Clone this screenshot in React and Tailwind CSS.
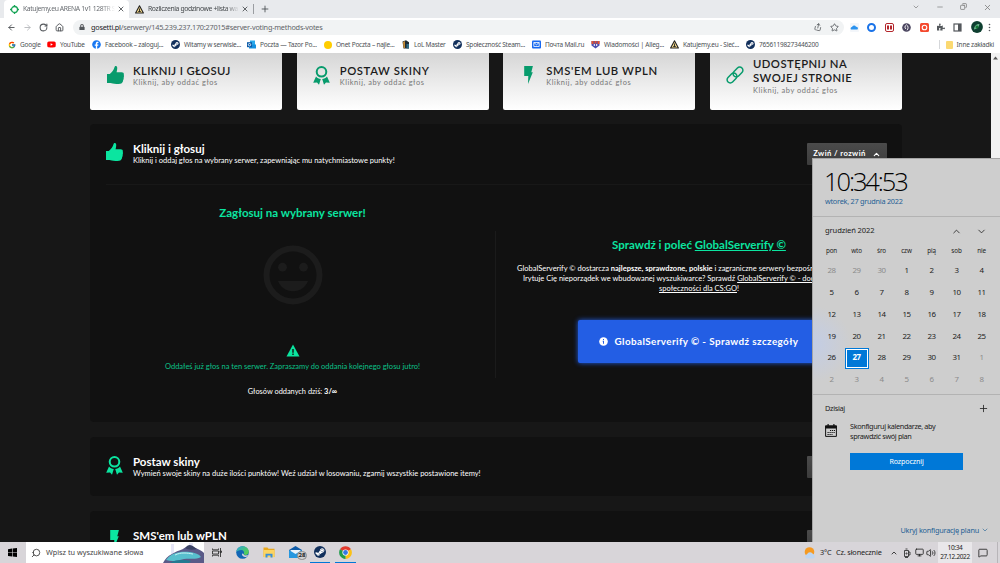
import clsx from "clsx";
import { FaFacebook, FaSteamSymbol, FaLock, FaPuzzlePiece, FaYoutube } from "react-icons/fa";
import { FcGoogle } from "react-icons/fc";
import {
  ArrowLeft, ArrowRight, ChevronDown, ChevronUp, Copy, House, MessageSquare, Minus,
  Monitor, Plus, RotateCw, Search, Share, Star, Volume2, X,
} from "lucide-react";

/* ---------- small drawings ---------- */

function ThumbIcon() {
  return (
    <svg viewBox="0 0 17 18" className="h-[18px] w-[17px]" fill="currentColor">
      <path d="M8.8 0C10.2 0 10.4 1.6 10.1 3.4L9.6 6.2h5c2 0 2.5 1.2 2.2 2.6.3 1 .2 2-.1 2.8.1 1-.1 1.9-.6 2.7 0 1-.5 1.9-1 2.4-.8 1-2.6 1.3-5.6 1.3-3.4 0-4.5-.8-6-1H0V8h2.8C5 6.4 6.8 4 7.4 1.6 7.6.6 7.9 0 8.8 0z" />
    </svg>
  );
}

function RibbonIcon() {
  return (
    <svg viewBox="0 0 17 19" className="h-[19px] w-[17px]" fill="currentColor">
      <circle cx="8.5" cy="5.8" r="4.8" fill="none" stroke="currentColor" strokeWidth="2" />
      <path d="M3 10.5c1.2 1.5 2.8 2.3 4.8 2.4L6 18.8l-2-2.4-3.8.4z" />
      <path d="M14 10.5c-1.2 1.5-2.8 2.3-4.8 2.4l1.8 5.9 2-2.4 3.8.4z" />
    </svg>
  );
}

function FlashIcon() {
  return (
    <svg viewBox="0 0 17 18" className="h-[18px] w-[17px]" fill="currentColor">
      <path d="M4.2 0h8.7l-1.6 6.200h1.500L8 18l.3-8H4.200z" />
    </svg>
  );
}

function LinkIcon() {
  return (
    <svg viewBox="0 0 18 18" className="h-[18px] w-[18px]" fill="none" stroke="currentColor" strokeWidth="1.5">
      <rect x="-5.6" y="-3.2" width="11.2" height="6.4" rx="3.2" transform="translate(6 12) rotate(-45)" />
      <rect x="-5.6" y="-3.2" width="11.2" height="6.4" rx="3.2" transform="translate(12 6) rotate(-45)" />
    </svg>
  );
}

function SmileIcon() {
  return (
    <svg viewBox="0 0 60 60" className="h-[60px] w-[60px] text-[#1c1c1c]" fill="currentColor">
      <circle cx="30" cy="30" r="26.5" fill="none" stroke="currentColor" strokeWidth="6" />
      <circle cx="19.5" cy="22.2" r="4.4" />
      <circle cx="40.5" cy="22.2" r="4.4" />
      <path d="M15 36h30c-2.5 6.5-8 10.3-15 10.3S17.5 42.5 15 36z" />
    </svg>
  );
}

function WarningIcon() {
  return (
    <svg viewBox="0 0 14 13" className="h-[13px] w-[14px]">
      <path d="M7 .5l6.5 12H.5z" fill="#0be5a0" />
      <path d="M6.3 5h1.4v3.7H6.3zM6.3 9.6h1.4V11H6.3z" fill="#111" />
    </svg>
  );
}

function SteamIcon({ className = "size-[9px]" }) {
  return (
    <span className={clsx("flex items-center justify-center rounded-full bg-[#12305c] text-white", className)}>
      <FaSteamSymbol className="size-full p-px" />
    </span>
  );
}

function TriangleLogo() {
  return (
    <svg viewBox="0 0 9 9" className="size-[9px] shrink-0">
      <path d="M4.5.8L8.4 8H.6z" fill="#f4d98a" stroke="#222" strokeWidth="1.1" strokeLinejoin="round" />
      <path d="M4.5 3.5v3M3.2 6.5h2.6" stroke="#222" strokeWidth=".9" />
    </svg>
  );
}

function TargetLogo() {
  return (
    <svg viewBox="0 0 9 9" className="size-[9px] shrink-0" fill="none" stroke="#18a558" strokeWidth="1.3">
      <circle cx="4.5" cy="4.5" r="3" />
      <path d="M4.5 0v2M4.5 7v2M0 4.5h2M7 4.5h2" />
    </svg>
  );
}

function OutlookLogo() {
  return (
    <svg viewBox="0 0 9 9" className="size-[9px]">
      <path d="M3 .5h5V6H3z" fill="#28a8ea" />
      <path d="M2 4.5h7v4H2z" fill="#1490df" />
      <path d="M0 2.2h5v5H0z" fill="#0a5aa8" />
      <circle cx="2.5" cy="4.7" r="1.2" fill="none" stroke="#fff" strokeWidth=".8" />
    </svg>
  );
}

function LolLogo() {
  return (
    <svg viewBox="0 0 8 9" className="h-[9px] w-[8px]">
      <path d="M.5 1.5L4 .3l3 2v6.200H1.500z" fill="#1c2a33" />
      <path d="M1 2l2-1v7H1.500z" fill="#c58b36" />
      <path d="M4.500 4H7v4.500H4.500z" fill="#2c6a85" />
    </svg>
  );
}

function MailLogo() {
  return (
    <svg viewBox="0 0 9 9" className="size-[9px]">
      <rect y=".5" width="9" height="8" rx="1" fill="#1668f0" />
      <path d="M1.8 2.5h5.4v4H1.8zM1.8 2.5l2.7 2.3 2.7-2.3" fill="none" stroke="#fff" strokeWidth=".8" />
    </svg>
  );
}

function AllegLogo() {
  return (
    <svg viewBox="0 0 9 9" className="size-[9px]">
      <path d="M.5 1h8v4.500l-4 3-4-3z" fill="#4a4fb0" />
      <path d="M.5 1h2v3h-2zM6.500 1h2v3h-2zM3.500 1h2v2.500h-2z" fill="#e8542f" />
      <path d="M2.800 4h1v2h-1zM5.200 4h1v2h-1z" fill="#fff" />
    </svg>
  );
}

function EdgeLogo() {
  return (
    <svg viewBox="0 0 13 13" className="size-[13px]">
      <defs>
        <linearGradient id="edge" x1="0" y1="0" x2="1" y2=".6">
          <stop offset="0" stopColor="#2ba5dd" />
          <stop offset="1" stopColor="#55cf52" />
        </linearGradient>
      </defs>
      <circle cx="6.5" cy="6.5" r="6.3" fill="#1266b5" />
      <path d="M.3 6C.8 2.3 3.3.2 6.6.2c3.7 0 6.2 2.6 6.2 5.500 0 2-1.500 3.200-3.300 3.200-1.200 0-1.900-.6-1.700-1.200.8-1.700-.3-3.700-2.600-3.700C2.900 4 1 5 .3 6z" fill="url(#edge)" />
      <path d="M7.700 8c-.3.700.4 1.500 1.900 1.500 1.100 0 2-.3 2.700-.8-.5 1-1.200 1.800-2 2.300C8 11.500 5.600 10 6 7.500z" fill="#d8d5d9" />
    </svg>
  );
}

function FolderLogo() {
  return (
    <svg viewBox="0 0 12 11" className="h-[11px] w-[12px]">
      <path d="M.5.5h4l1 1.300h6V10H.5z" fill="#e8a81d" />
      <path d="M.5 3h11v7.200H.5z" fill="#fcd462" />
      <path d="M2.500 10.500V6.800h7v3.700h-2V8.600h-3v1.900z" fill="#3a8fd9" />
    </svg>
  );
}

function MailApp() {
  return (
    <div className="relative h-[13px] w-[18px]">
      <svg viewBox="0 0 13 12" className="h-[12px] w-[13px]">
        <path d="M0 4l6.500-4L13 4v8H0z" fill="#0f5ca8" />
        <path d="M1.500 4h10v4h-10z" fill="#e9f3fb" />
        <path d="M0 4l6.500 4L13 4v8H0z" fill="#2697df" />
      </svg>
      <span className="absolute top-[5px] left-[8px] flex h-[9px] w-[10px] items-center justify-center rounded-full border border-[#8b8b8b] bg-[#cfcfcf] text-[6px] font-bold text-[#222]">
        28
      </span>
    </div>
  );
}

function ChromeLogo() {
  return (
    <svg viewBox="0 0 13 13" className="size-[13px]">
      <path d="M6.500 6.500L.98 3.300A6.400 6.400 0 0 1 12.020 3.300z" fill="#e33b2e" />
      <path d="M6.500 6.500L12.020 3.300A6.400 6.400 0 0 1 6.500 12.900z" fill="#fbc116" />
      <path d="M6.500 6.500V12.900A6.400 6.400 0 0 1 .98 3.300z" fill="#229c4c" />
      <circle cx="6.5" cy="6.5" r="3.1" fill="#fff" />
      <circle cx="6.5" cy="6.5" r="2.4" fill="#3578e5" />
    </svg>
  );
}

/* ---------- browser ---------- */

const bookmarks = [
  { label: "Google", width: "w-[40px]", icon: <FcGoogle className="size-[8px]" /> },
  { label: "YouTube", width: "w-[45px]", icon: <FaYoutube className="size-[9px] text-[#f00]" /> },
  { label: "Facebook – zaloguj...", width: "w-[79px]", icon: <FaFacebook className="size-[9px] text-[#1877f2]" /> },
  { label: "Witamy w serwisie...", width: "w-[76px]", icon: <SteamIcon /> },
  { label: "Poczta — Tazor Po...", width: "w-[76px]", icon: <OutlookLogo /> },
  { label: "Onet Poczta – najle...", width: "w-[78px]", icon: <span className="size-[8px] rounded-full bg-[#ffcd00]" /> },
  { label: "LoL Master", width: "w-[52px]", icon: <LolLogo /> },
  { label: "Społeczność Steam...", width: "w-[79px]", icon: <SteamIcon /> },
  { label: "Почта Mail.ru", width: "w-[59px]", icon: <MailLogo /> },
  { label: "Wiadomości | Alleg...", width: "w-[79px]", icon: <AllegLogo /> },
  { label: "Katujemy.eu - Sieć...", width: "w-[76px]", icon: <TriangleLogo /> },
  { label: "76561198273446200", width: "w-[80px]", icon: <SteamIcon /> },
];

function TabBar() {
  return (
    <div className="flex h-[18px] shrink-0 items-end bg-[#e8eaed] pl-[4px] text-[6.8px] text-[#45494d]">
      <div className="flex h-[18px] w-[125px] items-center rounded-t-[4px] bg-white pl-[6px]">
        <TargetLogo />
        <span className="ml-[4px] w-[92px] whitespace-nowrap bg-gradient-to-r from-[#5f6368] from-85% to-white bg-clip-text tracking-[-0.38px] text-transparent">
          Katujemy.eu ARENA 1v1 128TR S
        </span>
        <X className="ml-[2px] size-[8px] text-[#45494d]" strokeWidth={2.5} />
      </div>
      <div className="flex h-[18px] w-[125px] items-center pl-[6px]">
        <TriangleLogo />
        <span className="ml-[4px] w-[91px] whitespace-nowrap bg-gradient-to-r from-[#3c4043] from-85% to-[#e8eaed] bg-clip-text tracking-[-0.36px] text-transparent">
          Rozliczenia godzinowe +lista wa
        </span>
        <X className="ml-[2px] size-[8px]" strokeWidth={2.5} />
        <span className="ml-auto h-[10px] w-px bg-[#9a9da1]" />
      </div>
      <div className="flex h-[18px] flex-1 items-center pl-[6px]">
        <Plus className="size-[10px]" strokeWidth={2} />
      </div>
      <div className="flex w-[88px] justify-between self-start pt-[3px] pr-[8px] text-[#777]">
        <ChevronDown className="size-[8px]" strokeWidth={2} />
        <Minus className="size-[8px]" strokeWidth={2} />
        <Copy className="size-[7px] -scale-x-100" strokeWidth={2.5} />
        <X className="size-[9px]" strokeWidth={2} />
      </div>
    </div>
  );
}

function Toolbar() {
  return (
    <div className="flex h-[18px] shrink-0 items-center bg-white text-[#54585c]">
      <div className="flex w-[73px] items-center gap-[7px] pl-[7px]">
        <ArrowLeft className="size-[9px]" strokeWidth={2.5} />
        <ArrowRight className="size-[9px] text-[#b9bbbe]" strokeWidth={2.5} />
        <RotateCw className="size-[9px]" strokeWidth={2.8} />
        <House className="size-[9px]" strokeWidth={2.5} />
      </div>
      <div className="flex h-[15px] w-[771px] items-center rounded-full bg-[#f1f3f4] pl-[6px]">
        <FaLock className="size-[6px]" />
        <span className="ml-[6px] flex-1 text-[7.3px] tracking-[-0.23px] text-[#5f6368]">
          <span className="text-[#202124]">gosetti.pl</span>
          /serwery/145.239.237.170:27015#server-voting-methods-votes
        </span>
        <Share className="size-[8px] rotate-12" strokeWidth={2.2} />
        <Star className="mr-[5px] ml-[8px] size-[9px]" strokeWidth={2.2} />
      </div>
      <div className="flex flex-1 items-center justify-between pr-[9px] pl-[6px]">
        <svg viewBox="0 0 9 9" className="size-[9px]">
          <rect width="9" height="9" rx="1" fill="#f3f6fa" />
          <path d="M1 6.500a1.500 1.500 0 0 1 1-2.500 2.200 2.200 0 0 1 4-.3A1.700 1.700 0 0 1 7.500 6.500z" fill="#2a92ee" />
        </svg>
        <span className="size-[9px] rounded-full border-[2.5px] border-[#1a73e8] bg-white" />
        <svg viewBox="0 0 9 9" className="size-[9px]">
          <rect x=".5" y=".5" width="8" height="8" rx="1.5" fill="#fff" stroke="#b3262c" />
          <path d="M2 2.500h2v4H2zM5 2.500h2v4H5z" fill="#b3262c" />
        </svg>
        <svg viewBox="0 0 9 9" className="size-[9px]">
          <circle cx="4.5" cy="4.5" r="4.3" fill="#4b4660" />
          <path d="M4.500 1.800c2 1 2 4 .5 5.400M4.500 1.800C2.500 3 2.500 5 4 6" fill="none" stroke="#fff" strokeWidth=".9" />
        </svg>
        <svg viewBox="0 0 9 9" className="size-[9px]">
          <rect width="9" height="9" rx="1.5" fill="#f4492e" />
          <circle cx="4.5" cy="4.5" r="2.3" fill="none" stroke="#fff" strokeWidth="1.1" />
        </svg>
        <FaPuzzlePiece className="size-[8px]" />
        <svg viewBox="0 0 9 9" className="size-[9px]">
          <rect x="1" y="1" width="7" height="7" fill="none" stroke="#54585c" strokeWidth="1.2" />
          <path d="M5 1h3v7H5z" fill="#54585c" />
        </svg>
        <svg viewBox="0 0 12 12" className="-mr-[3px] size-[12px]">
          <circle cx="6" cy="6" r="5.9" fill="#0e3f30" />
          <path d="M3 8.500C3 5 5.500 3 8.500 3 8 6 6.500 8 3 8.500z" fill="#69b48a" />
          <circle cx="6" cy="6" r="1.5" fill="#173" />
        </svg>
        <svg viewBox="0 0 3 9" className="h-[9px] w-[3px]" fill="#54585c">
          <circle cx="1.5" cy="1.5" r=".8" />
          <circle cx="1.5" cy="4.5" r=".8" />
          <circle cx="1.5" cy="7.5" r=".8" />
        </svg>
      </div>
    </div>
  );
}

function BookmarksBar() {
  return (
    <div className="flex h-[17px] shrink-0 items-center bg-white pl-[7px] text-[6.5px] tracking-[-0.22px] text-[#4c5054]">
      {bookmarks.map((b, i) => (
        <div key={i} className={clsx("flex shrink-0 items-center gap-[4px] whitespace-nowrap", b.width)}>
          <span className="flex w-[9px] justify-center">{b.icon}</span>
          {b.label}
        </div>
      ))}
      <div className="ml-auto flex items-center border-l border-[#d5d7da] pr-[6px] pl-[6px] whitespace-nowrap">
        <span className="mr-[4px] h-[8px] w-[7px] rounded-[1px] bg-[#fbd971]" />
        Inne zakładki
      </div>
    </div>
  );
}

/* ---------- page ---------- */

const methods = [
  { title: "KLIKNIJ I GŁOSUJ", icon: <ThumbIcon />, tracking: "tracking-[0.35px]" },
  { title: "POSTAW SKINY", icon: <RibbonIcon />, tracking: "tracking-[0.6px]" },
  { title: "SMS'EM LUB WPLN", icon: <FlashIcon />, tracking: "tracking-[0.6px]" },
  { title: "UDOSTĘPNIJ NA SWOJEJ STRONIE", icon: <LinkIcon />, tracking: "tracking-[0.45px]" },
];

function MethodCard({ title, icon, tracking }) {
  return (
    <div className="flex h-[57px] items-center rounded-b-[2px] bg-gradient-to-b from-[#d6d6d6] to-white pb-[11px] pl-[16px]">
      <span className="mb-[2px] flex w-[18px] shrink-0 justify-center text-[#079b6c]">{icon}</span>
      <div className="ml-[9px]">
        <h3 className={clsx("w-[125px] text-[11.3px] leading-[14.5px] font-semibold text-[#1b1b1b]", tracking)}>{title}</h3>
        <p className="text-[7.4px] leading-[10px] tracking-[0.57px] text-[#777]">Kliknij, aby oddać głos</p>
      </div>
    </div>
  );
}

function PanelHeader({ icon, title, text }) {
  return (
    <div className="flex pt-[18px] pr-[15px] pl-[16px]">
      <span className="mt-[1px] flex w-[17px] shrink-0 justify-center text-[#0be5a0]">{icon}</span>
      <div className="ml-[10px] flex-1">
        <h2 className="text-[11.5px] leading-[14px] font-bold text-white">{title}</h2>
        {text && <p className="text-[7.5px] leading-[10px] text-white">{text}</p>}
      </div>
      <button className="mt-[1px] flex h-[22px] w-[80px] items-center justify-center gap-[6px] rounded-[1px] bg-gradient-to-b from-[#4b4b4b] to-[#3c3c3c] text-[7.7px] font-bold tracking-[0.4px] text-white">
        Zwiń / rozwiń
        <ChevronUp className="size-[9px]" strokeWidth={3} />
      </button>
    </div>
  );
}

function VotePanel() {
  return (
    <section className="h-[298px] rounded-[4px] bg-[#111]">
      <PanelHeader
        icon={<ThumbIcon />}
        title="Kliknij i głosuj"
        text="Kliknij i oddaj głos na wybrany serwer, zapewniając mu natychmiastowe punkty!"
      />
      <div className="mx-[16px] mt-[18px] border-t border-[#181818]" />
      <div className="grid grid-cols-[405px_407px]">
        <div className="flex flex-col items-center">
          <h3 className="mt-[21px] text-[11.5px] leading-[14px] font-bold text-[#0be5a0]">Zagłosuj na wybrany serwer!</h3>
          <div className="mt-[25px]">
            <SmileIcon />
          </div>
          <div className="mt-[39px]">
            <WarningIcon />
          </div>
          <p className="mt-[5px] text-[7.5px] leading-[10px] text-[#0bc188]">
            Oddałeś już głos na ten serwer. Zapraszamy do oddania kolejnego głosu jutro!
          </p>
          <p className="mt-[15px] text-[7.4px] leading-[10px] text-white">
            Głosów oddanych dziś: <b>3/∞</b>
          </p>
        </div>
        <div className="mt-[46px] flex h-[147px] flex-col items-center border-l border-[#1b1b1b] whitespace-nowrap">
          <h3 className="mt-[7px] text-[11.5px] leading-[14px] font-bold text-[#0be5a0]">
            Sprawdź i poleć <u>GlobalServerify ©</u>
          </h3>
          <div className="mt-[12px] w-full pl-[21px] text-[7.5px] leading-[10px] text-white">
            <p>
              GlobalServerify © dostarcza <b>najlepsze, sprawdzone, polskie</b> i zagraniczne serwery bezpośrednio
            </p>
            <p className="pl-[6px]">
              Irytuje Cię nieporządek we wbudowanej wyszukiwarce? Sprawdź <u>GlobalServerify © - dodatek</u>
            </p>
            <p className="pl-[142px]">
              <u>społeczności dla CS:GO</u>!
            </p>
          </div>
          <button className="mt-[26px] flex h-[43px] w-[243px] shrink-0 items-center rounded-[2px] bg-[#235ee4] pl-[21px] text-[9.9px] font-bold tracking-[0.4px] text-white shadow-[0_0_5px_#235ee4]">
            <svg viewBox="0 0 9 9" className="mr-[7px] size-[9px]">
              <circle cx="4.5" cy="4.5" r="4.3" fill="#fff" />
              <path d="M4 2h1v1H4zM3.700 3.700H5v3H4v-2h-.3z" fill="#235ee4" />
            </svg>
            GlobalServerify © - Sprawdź szczegóły
          </button>
        </div>
      </div>
    </section>
  );
}

function Page() {
  return (
    <div className="flex h-[489px] shrink-0 overflow-hidden bg-[#171717] font-['Lato',sans-serif]">
      <div className="ml-[90px] w-[812px]">
        <div className="grid grid-cols-4 gap-[14.7px]">
          {methods.map((m) => (
            <MethodCard key={m.title} {...m} />
          ))}
        </div>
        <div className="mt-[14px] flex flex-col gap-[15px]">
          <VotePanel />
          <section className="h-[59px] rounded-[4px] bg-[#111]">
            <PanelHeader
              icon={<RibbonIcon />}
              title="Postaw skiny"
              text="Wymień swoje skiny na duże ilości punktów! Weź udział w losowaniu, zgarnij wszystkie postawione itemy!"
            />
          </section>
          <section className="h-[59px] rounded-[4px] bg-[#111]">
            <PanelHeader icon={<FlashIcon />} title="SMS'em lub wPLN" />
          </section>
        </div>
      </div>
      <div className="ml-auto flex w-[9px] justify-center bg-[#f1f1f1] pt-[3px]">
        <svg viewBox="0 0 5 4" className="h-[4px] w-[5px]">
          <path d="M0 3.500L2.500.5 5 3.500z" fill="#555" />
        </svg>
      </div>
    </div>
  );
}

/* ---------- clock flyout ---------- */

const weekdays = ["pon", "wto", "śro", "czw", "pią", "sob", "nie"];
// three days of november, december, then the start of january
const days = Array.from({ length: 42 }, (_, i) => {
  if (i < 3) return { n: 28 + i, muted: true };
  if (i < 34) return { n: i - 2, muted: false };
  return { n: i - 33, muted: true };
});

function ClockFlyout() {
  return (
    <div className="absolute top-[158px] left-[812px] flex h-[384px] w-[188px] flex-col border-t border-l border-[#a5a5a5] bg-[#cecece] bg-[radial-gradient(circle_at_0px_185px,#c3cde5_0px,#cecece_38px)] text-[7.3px] tracking-[-0.12px] text-[#222]">
      <div className="h-[58px] border-b border-[#b3b3b3] pl-[12px]">
        <p className="mt-[6px] -ml-px font-['Open_Sans',sans-serif] text-[25.5px] leading-[32px] font-light tracking-[-2.1px] text-black">10:34:53</p>
        <p className="leading-[8px] tracking-[-0.25px] text-[#1f5f94]">wtorek, 27 grudnia 2022</p>
      </div>
      <div className="h-[178px] border-b border-[#b3b3b3]">
        <div className="flex h-[28px] items-center pl-[12px]">
          <span className="w-[126px] text-[7.6px]">grudzień 2022</span>
          <ChevronUp className="size-[11px]" strokeWidth={1.8} />
          <ChevronDown className="ml-[14px] size-[11px]" strokeWidth={1.8} />
        </div>
        <div className="ml-[6px] grid w-[175px] grid-cols-7 text-center">
          {weekdays.map((d) => (
            <span key={d} className="h-[15px] text-[6.3px] leading-[12px]">{d}</span>
          ))}
          {days.map((d, i) => (
            <span key={i} className="flex h-[21.85px] items-center justify-center text-[7.9px] tracking-[-0.4px]">
              {i === 29 ? (
                <span className="flex h-[21px] w-[24px] shrink-0 items-center justify-center border border-[#0078d7] bg-[#0078d7] font-bold text-white shadow-[inset_0_0_0_1px_white]">
                  {d.n}
                </span>
              ) : (
                <span className={d.muted ? "text-[#8b8b8b]" : "text-[#222]"}>{d.n}</span>
              )}
            </span>
          ))}
        </div>
      </div>
      <div className="flex h-[26px] items-center justify-between pr-[11px] pl-[12px] tracking-[-0.3px]">
        Dzisiaj
        <Plus className="size-[11px]" strokeWidth={1.8} />
      </div>
      <div className="flex pl-[12px]">
        <svg viewBox="0 0 12 13" className="mt-[3px] h-[13px] w-[12px]">
          <path d="M.6 2h10.800v10.400H.6z" fill="none" stroke="#111" strokeWidth="1" />
          <path d="M.2 1.500h11.600v3H.2zM2.500 0h1.200v2H2.500zM8.300 0h1.200v2H8.300z" fill="#111" />
          <path d="M5 6.500h5M2.500 8.500H10M2.500 10.500h5" stroke="#111" strokeWidth="1.100" strokeDasharray="1.200 .8" />
        </svg>
        <div className="ml-[13px]">
          <p className="mt-px leading-[9.5px] tracking-[-0.36px]">
            Skonfiguruj kalendarze, aby
            <br />
            sprawdzić swój plan
          </p>
          <button className="mt-[12px] h-[17px] w-[113px] bg-[#0078d7] text-[7.1px] text-white">Rozpocznij</button>
        </div>
      </div>
      <div className="mt-auto flex h-[24px] items-center justify-end gap-[2px] pr-[11px] tracking-[-0.22px] whitespace-nowrap text-[#1f5f94]">
        Ukryj konfigurację planu
        <ChevronDown className="size-[8px]" strokeWidth={1.8} />
      </div>
    </div>
  );
}

/* ---------- taskbar ---------- */

function Taskbar() {
  return (
    <div className="flex h-[21px] shrink-0 items-center bg-[#d8d5d9] text-[7.3px] text-[#222]">
      <div className="flex w-[26px] justify-center pr-[1px]">
        <svg viewBox="0 0 9 9" className="size-[9px]">
          <path d="M0 1.200l4-.6v3.700H0zM4.600.5L9 0v4.300H4.600zM0 4.800h4v3.700l-4-.6zM4.600 4.800H9V9l-4.400-.5z" fill="#000" />
        </svg>
      </div>
      <div className="flex h-[21px] w-[178px] items-center overflow-hidden bg-white pl-[5px]">
        <Search className="size-[10px] -scale-x-100 text-[#333]" strokeWidth={2} />
        <span className="ml-[5px] w-[117px] whitespace-nowrap text-[#444]">Wpisz tu wyszukiwane słowa</span>
        <svg viewBox="0 0 41 20" className="h-[20px] w-[41px]">
          <path d="M8 1h3v10H8zM26 0h4v8h-4z" fill="#e6e6f7" />
          <path d="M0 20C4 12 12 9 20 6c4-3 8-1 12-1 4 1 7 3 9 5v10z" fill="#5a5a88" />
          <path d="M3 17C9 9 18 8 27 9c5 1 9 2 11 5-6 3-10 1-17 2-7 2-12 3-18 1z" fill="#58bfcd" />
          <path d="M7 20c6-4 16-3 21-2l-2 2z" fill="#247a91" />
          <path d="M24 3c4-3 7 1 10 3-4 1-9 1-12-1z" fill="#3b4365" />
          <path d="M12 12c6-3 12-2 18-1" stroke="#c6f1f2" fill="none" />
        </svg>
      </div>
      <div className="flex w-[25px] justify-center">
        <svg viewBox="0 0 10 9" className="h-[9px] w-[10px]" fill="none" stroke="#333" strokeWidth=".9">
          <path d="M.5.500v1.300h6V.5M.5 8.500V7.200h6v1.300M.5 3h6v3h-6zM8.500 0v9M8 3h1.500v1.500H8z" />
        </svg>
      </div>
      <div className="flex w-[27px] justify-center"><EdgeLogo /></div>
      <div className="flex w-[25px] justify-center"><FolderLogo /></div>
      <div className="flex w-[26px] justify-end"><MailApp /></div>
      <div className="ml-[3px] flex h-[21px] w-[20px] items-center justify-center border-b-[1.5px] border-[#0078d7]">
        <SteamIcon className="size-[12px]" />
      </div>
      <div className="ml-[5px] flex h-[21px] w-[21px] items-center justify-center border-b-[1.5px] border-[#0078d7]">
        <ChromeLogo />
      </div>
      <div className="ml-auto flex h-[21px] items-center whitespace-nowrap">
        <svg viewBox="0 0 12 12" className="size-[12px] shrink-0">
          <circle cx="5.5" cy="5" r="4.8" fill="#f59a23" />
          <path d="M3 11.500a2.200 2.200 0 0 1 0-4.300 3.500 3.500 0 0 1 6-.3 2.500 2.500 0 0 1 .5 4.600z" fill="#bdd5f2" />
        </svg>
        <span className="ml-[4px] w-[16px] tracking-[-0.2px]">3°C</span>
        <span className="w-[54px] tracking-[-0.15px]">Cz. słonecznie</span>
        <ChevronUp className="size-[8px]" strokeWidth={2.5} />
        <svg viewBox="0 0 8 10" className="ml-[5px] h-[10px] w-[8px]" fill="none" stroke="#222" strokeWidth=".8">
          <path d="M1.500 2.500h4v6h-4zM2.500 1h2M2 9.500h3M5.500 4h1.500v3H5.500" />
          <circle cx="3.5" cy="5.5" r=".6" />
        </svg>
        <Monitor className="ml-[4px] size-[9px]" strokeWidth={2.2} />
        <Volume2 className="ml-[2px] size-[10px]" strokeWidth={2} />
        <div className="ml-[2px] h-[21px] w-[34px] bg-[#e9e7ea] pt-[1px] text-center text-[6.5px] leading-[9px] tracking-[-0.35px]">
          <p>10:34</p>
          <p>27.12.2022</p>
        </div>
        <MessageSquare className="mr-[9px] ml-[6px] size-[10px]" strokeWidth={2} />
        <span className="mr-[2px] h-[21px] w-px bg-[#b8b5b9]" />
      </div>
    </div>
  );
}

export default function App() {
  return (
    <main className="relative flex h-[563px] w-[1000px] flex-col overflow-hidden font-['Noto_Sans',sans-serif]">
      <TabBar />
      <Toolbar />
      <BookmarksBar />
      <Page />
      <Taskbar />
      <ClockFlyout />
    </main>
  );
}
